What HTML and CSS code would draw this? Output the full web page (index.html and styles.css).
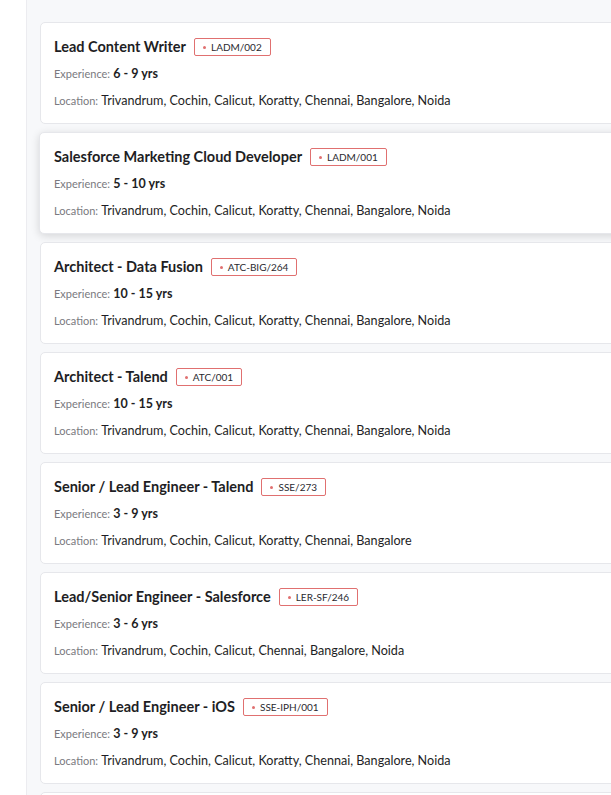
FILE: index.html
```html
<!DOCTYPE html>
<html lang="en">
<head>
    <meta charset="UTF-8">
    <meta name="viewport" content="width=device-width, initial-scale=1.0">
    <title>Openings</title>
    <link rel="stylesheet" href="styles.css">
</head>
<body>
    <div class="page">
        <aside class="side"></aside>
        <main class="job-list">
            <div class="job-card">
                <div class="job-title">Lead Content Writer <span class="job-code">LADM/002</span></div>
                <div class="job-row"><span class="label">Experience:</span> <b>6 - 9 yrs</b></div>
                <div class="job-row"><span class="label">Location:</span> <span class="loc">Trivandrum, Cochin, Calicut, Koratty, Chennai, Bangalore, Noida</span></div>
            </div>
            <div class="job-card active">
                <div class="job-title">Salesforce Marketing Cloud Developer <span class="job-code">LADM/001</span></div>
                <div class="job-row"><span class="label">Experience:</span> <b>5 - 10 yrs</b></div>
                <div class="job-row"><span class="label">Location:</span> <span class="loc">Trivandrum, Cochin, Calicut, Koratty, Chennai, Bangalore, Noida</span></div>
            </div>
            <div class="job-card">
                <div class="job-title">Architect - Data Fusion <span class="job-code">ATC-BIG/264</span></div>
                <div class="job-row"><span class="label">Experience:</span> <b>10 - 15 yrs</b></div>
                <div class="job-row"><span class="label">Location:</span> <span class="loc">Trivandrum, Cochin, Calicut, Koratty, Chennai, Bangalore, Noida</span></div>
            </div>
            <div class="job-card">
                <div class="job-title">Architect - Talend <span class="job-code">ATC/001</span></div>
                <div class="job-row"><span class="label">Experience:</span> <b>10 - 15 yrs</b></div>
                <div class="job-row"><span class="label">Location:</span> <span class="loc">Trivandrum, Cochin, Calicut, Koratty, Chennai, Bangalore, Noida</span></div>
            </div>
            <div class="job-card">
                <div class="job-title">Senior / Lead Engineer - Talend <span class="job-code">SSE/273</span></div>
                <div class="job-row"><span class="label">Experience:</span> <b>3 - 9 yrs</b></div>
                <div class="job-row"><span class="label">Location:</span> <span class="loc">Trivandrum, Cochin, Calicut, Koratty, Chennai, Bangalore</span></div>
            </div>
            <div class="job-card">
                <div class="job-title">Lead/Senior Engineer - Salesforce <span class="job-code">LER-SF/246</span></div>
                <div class="job-row"><span class="label">Experience:</span> <b>3 - 6 yrs</b></div>
                <div class="job-row"><span class="label">Location:</span> <span class="loc">Trivandrum, Cochin, Calicut, Chennai, Bangalore, Noida</span></div>
            </div>
            <div class="job-card">
                <div class="job-title">Senior / Lead Engineer - iOS <span class="job-code">SSE-IPH/001</span></div>
                <div class="job-row"><span class="label">Experience:</span> <b>3 - 9 yrs</b></div>
                <div class="job-row"><span class="label">Location:</span> <span class="loc">Trivandrum, Cochin, Calicut, Koratty, Chennai, Bangalore, Noida</span></div>
            </div>
            <div class="job-card"></div>
        </main>
    </div>
</body>
</html>
```

FILE: styles.css
```css
body {
    margin: 0;
    font-family: Lato, "Liberation Sans", sans-serif;
    background: #fff;
    color: #1e1e24;
    overflow: hidden;
}
.page {
    display: flex;
    height: 795px;
}
.side {
    width: 26px;
    flex-shrink: 0;
    background: #fff;
    border-right: 1px solid #ececf0;
}
.job-list {
    flex: 1;
    background: #f7f8fa;
    padding: 22px 0 0 13px;
    display: flex;
    flex-direction: column;
    gap: 8px;
    overflow: hidden;
}
.job-card {
    width: 640px;
    height: 102px;
    flex-shrink: 0;
    box-sizing: border-box;
    background: #fff;
    border: 1px solid #e6e7eb;
    border-radius: 5px;
    padding: 14px 13px 12px;
    display: flex;
    flex-direction: column;
    gap: 7px;
}
.job-card.active {
    margin-left: -1px;
    padding-left: 14px;
    box-shadow: 0 2px 8px rgba(0, 0, 0, 0.14);
}
.job-title {
    font-size: 14.5px;
    font-weight: bold;
    line-height: 20px;
    height: 20px;
    display: flex;
    align-items: center;
    gap: 8px;
}
.job-code {
    font-size: 10px;
    font-weight: normal;
    color: #2a2a30;
    border: 1px solid #e07070;
    border-radius: 2px;
    padding: 1px 8px 1px 8px;
    line-height: 14px;
    display: flex;
    align-items: center;
    gap: 5px;
}
.job-code::before {
    content: "";
    width: 3px;
    height: 3px;
    border-radius: 50%;
    background: #e07070;
}
.job-row {
    font-size: 12px;
    line-height: 20px;
    height: 20px;
}
.label {
    font-size: 11px;
    color: #7a7a80;
}
.job-row b {
    font-size: 12.5px;
    color: #1e1e24;
}
.loc {
    font-size: 12.6px;
    color: #1e1e24;
}
```
